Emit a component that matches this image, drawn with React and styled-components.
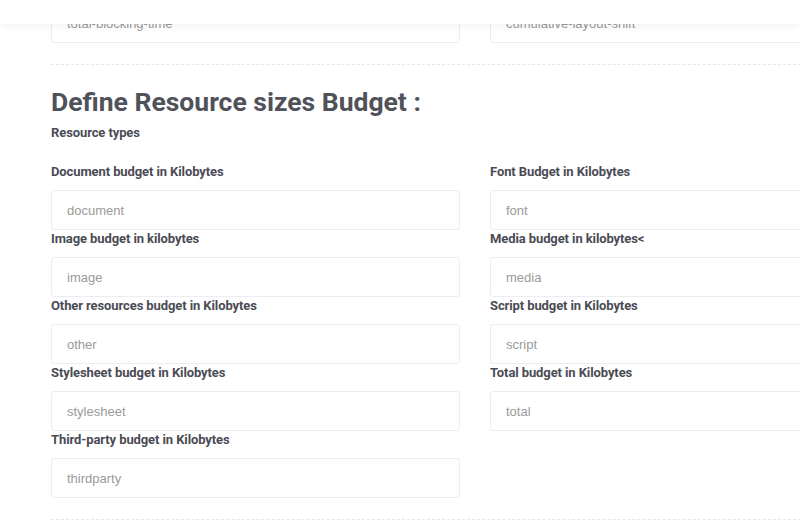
import React from "react";
import styled, { createGlobalStyle } from "styled-components";

const G = createGlobalStyle`
  body{margin:0;background:#fff;font-family:Roboto,"Liberation Sans",sans-serif;overflow:hidden;}
`;
const TopBar = styled.div`
  position:fixed;top:0;left:0;right:0;height:24px;background:#fff;
  box-shadow:0 2px 8px rgba(0,0,0,0.06);z-index:2;
`;
const Page = styled.div`padding:3px 0 0 51px;width:900px;`;
const Grid = styled.div`
  display:grid;grid-template-columns:409px 409px;column-gap:30px;row-gap:1px;
`;
const Field = styled.div`display:flex;flex-direction:column;`;
const Label = styled.div`
  font-size:13px;font-weight:700;color:#4b4b55;line-height:16px;margin-bottom:10px;letter-spacing:-0.1px;
`;
const Input = styled.div`
  box-sizing:border-box;height:40px;border:1px solid #ececf3;border-radius:3px;
  padding-left:15px;display:flex;align-items:center;font-size:13px;color:#9a9a9a;
  font-family:"Liberation Sans",Arial,sans-serif;
`;
const Divider = styled.div`border-top:1px dashed #e6e6ec;margin:${p=>p.$m};width:760px;`;
const H = styled.h2`
  margin:0;font-size:26.5px;line-height:30px;font-weight:700;color:#50525a;
`;
const Sub = styled.div`
  font-size:13px;font-weight:700;color:#4b4b55;line-height:16px;margin:8px 0 23px;letter-spacing:-0.1px;
`;

const fields = [
  ["Document budget in Kilobytes","document"],["Font Budget in Kilobytes","font"],
  ["Image budget in kilobytes","image"],["Media budget in kilobytes<","media"],
  ["Other resources budget in Kilobytes","other"],["Script budget in Kilobytes","script"],
  ["Stylesheet budget in Kilobytes","stylesheet"],["Total budget in Kilobytes","total"],
  ["Third-party budget in Kilobytes","thirdparty"],
];

export default function App(){
  return (<>
    <G/>
    <TopBar/>
    <Page>
      <Grid>
        <Input>total-blocking-time</Input>
        <Input>cumulative-layout-shift</Input>
      </Grid>
      <Divider $m="21px 0 22px"/>
      <H>Define Resource sizes Budget :</H>
      <Sub>Resource types</Sub>
      <Grid>
        {fields.map(([l,p])=>(
          <Field key={p}><Label>{l}</Label><Input>{p}</Input></Field>
        ))}
      </Grid>
      <Divider $m="21px 0 0"/>
    </Page>
  </>);
}
